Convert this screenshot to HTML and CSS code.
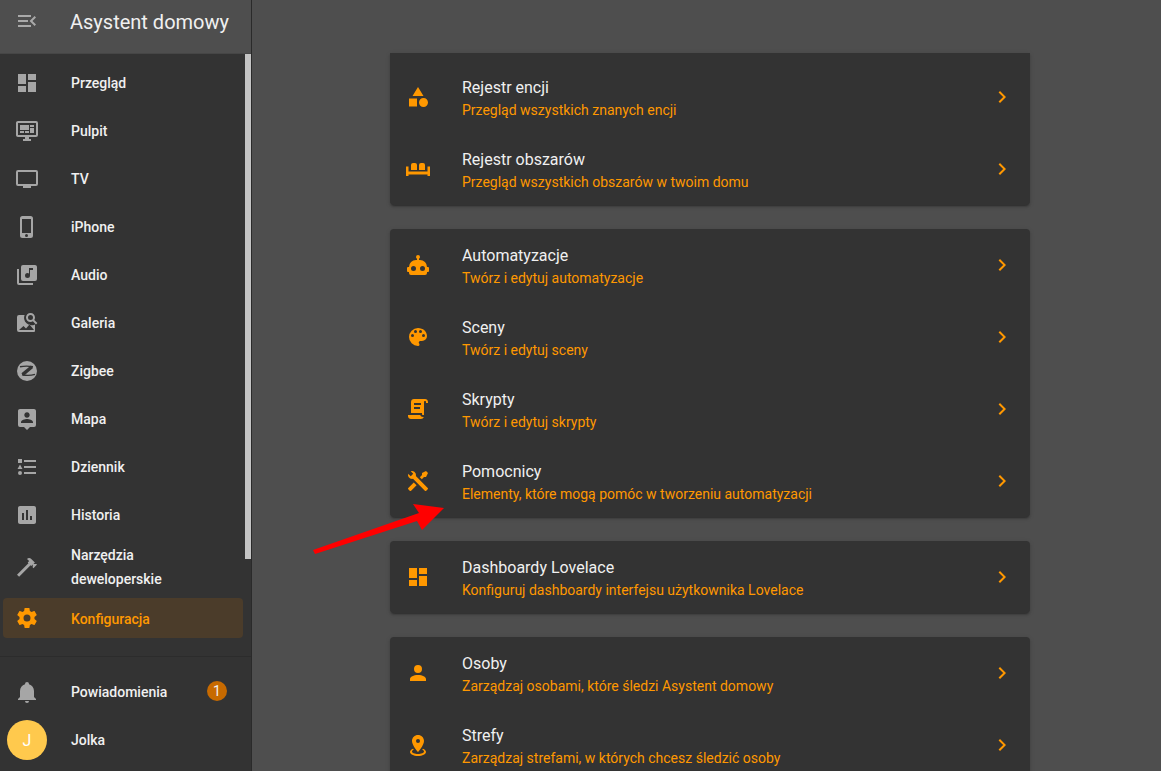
FILE: index.html
```html
<!DOCTYPE html>
<html lang="pl">
<head>
<meta charset="utf-8">
<title>Asystent domowy</title>
<link rel="stylesheet" href="styles.css">
</head>
<body>
<div class="app">
  <aside class="sidebar">
    <header class="side-head">
      <svg class="icon head-icon" viewBox="0 0 24 24"><path d="M21,15.61L19.59,17L14.58,12L19.59,7L21,8.39L17.44,12L21,15.61M3,6H16V8H3V6M3,13V11H13V13H3M3,18V16H16V18H3Z"/></svg>
      <span class="side-title">Asystent domowy</span>
    </header>
    <div class="side-scroll">
      <nav class="nav-list">
        <a class="nav-item"><svg class="icon" viewBox="0 0 24 24"><path d="M13,3V9H21V3M13,21H21V11H13M3,21H11V15H3M3,13H11V3H3V13Z"/></svg><span>Przegląd</span></a>
        <a class="nav-item"><svg class="icon" viewBox="0 0 24 24"><path d="M21,16V4H3V16H21M21,2A2,2 0 0,1 23,4V16A2,2 0 0,1 21,18H14V20H16V22H8V20H10V18H3C1.89,18 1,17.1 1,16V4C1,2.89 1.89,2 3,2H21M5,6H14V11H5V6M15,6H19V8H15V6M19,9V14H15V9H19M5,12H9V14H5V12M10,12H14V14H10V12Z"/></svg><span>Pulpit</span></a>
        <a class="nav-item"><svg class="icon" viewBox="0 0 24 24"><path d="M21,17H3V5H21M21,3H3A2,2 0 0,0 1,5V17A2,2 0 0,0 3,19H8V21H16V19H21A2,2 0 0,0 23,17V5A2,2 0 0,0 21,3Z"/></svg><span>TV</span></a>
        <a class="nav-item"><svg class="icon" viewBox="0 0 24 24"><path d="M16,18H7V4H16M11.5,22A1.5,1.5 0 0,1 10,20.5A1.5,1.5 0 0,1 11.5,19A1.5,1.5 0 0,1 13,20.5A1.5,1.5 0 0,1 11.5,22M15.5,1H7.5A2.5,2.5 0 0,0 5,3.5V20.5A2.5,2.5 0 0,0 7.5,23H15.5A2.5,2.5 0 0,0 18,20.5V3.5A2.5,2.5 0 0,0 15.5,1Z"/></svg><span>iPhone</span></a>
        <a class="nav-item"><svg class="icon" viewBox="0 0 24 24"><path d="M4,6H2V20A2,2 0 0,0 4,22H18V20H4M18,7H15V12.5A2.5,2.5 0 0,1 12.5,15A2.5,2.5 0 0,1 10,12.5A2.5,2.5 0 0,1 12.5,10C13.07,10 13.58,10.19 14,10.5V5H18M20,2H8A2,2 0 0,0 6,4V16A2,2 0 0,0 8,18H20A2,2 0 0,0 22,16V4C22,2.89 21.1,2 20,2Z"/></svg><span>Audio</span></a>
        <a class="nav-item"><svg class="icon" viewBox="0 0 24 24"><path d="M15.5,2C18,2 20,4 20,6.5C20,7.38 19.75,8.21 19.31,8.9L22.39,12L21,13.39L17.88,10.32C17.19,10.75 16.37,11 15.5,11C13,11 11,9 11,6.5C11,4 13,2 15.5,2M15.5,4A2.5,2.5 0 0,0 13,6.5A2.5,2.5 0 0,0 15.5,9A2.5,2.5 0 0,0 18,6.5A2.5,2.5 0 0,0 15.5,4Z"/><path fill-rule="evenodd" d="M4,4H9.6A7.5,7.5 0 0,0 20,13.4V20A1,1 0 0,1 19,21H4A2,2 0 0,1 2,19V6A2,2 0 0,1 4,4M4,19H19L14.5,13.5L11,17.5L8.5,15Z"/></svg><span>Galeria</span></a>
        <a class="nav-item"><svg class="icon" viewBox="0 0 24 24"><circle cx="12" cy="12" r="10"/><path class="z-thin" d="M5 7.8C9 7 14 7 18 7.8"/><path class="z-thick" d="M17 7.8L7.5 15.6"/><path class="z-thin" d="M7 15.8C11 16.6 16 16.6 20 15.4"/></svg><span>Zigbee</span></a>
        <a class="nav-item"><svg class="icon" viewBox="0 0 24 24"><path d="M18,16H6V15.1C6,13.1 10,12 12,12C14,12 18,13.1 18,15.1M12,5.3C13.5,5.3 14.7,6.5 14.7,8C14.7,9.5 13.5,10.7 12,10.7C10.5,10.7 9.3,9.5 9.3,8C9.3,6.5 10.5,5.3 12,5.3M19,2H5C3.89,2 3,2.89 3,4V18A2,2 0 0,0 5,20H9L12,23L15,20H19A2,2 0 0,0 21,18V4C21,2.89 20.1,2 19,2Z"/></svg><span>Mapa</span></a>
        <a class="nav-item"><svg class="icon" viewBox="0 0 24 24"><path d="M5,9.5L7.5,14H2.5L5,9.5M3,4H7V8H3V4M5,20A2,2 0 0,0 7,18A2,2 0 0,0 5,16A2,2 0 0,0 3,18A2,2 0 0,0 5,20M9,5V7H21V5H9M9,19H21V17H9V19M9,13H21V11H9V13Z"/></svg><span>Dziennik</span></a>
        <a class="nav-item"><svg class="icon" viewBox="0 0 24 24"><path d="M9 17H7V10H9V17M13 17H11V7H13V17M17 17H15V13H17V17M19 3H5C3.9 3 3 3.9 3 5V19C3 20.1 3.9 21 5 21H19C20.1 21 21 20.1 21 19V5C21 3.9 20.1 3 19 3Z"/></svg><span>Historia</span></a>
        <a class="nav-item nav-tall"><svg class="icon" viewBox="0 0 24 24"><path d="M2 19.63L13.43 8.2L12.72 7.5L14.14 6.07L12 3.89C13.2 2.7 15.09 2.7 16.27 3.89L19.87 7.5L18.45 8.91H21.29L22 9.62L18.45 13.21L17.74 12.5V9.62L16.27 11.04L15.56 10.33L4.13 21.76L2 19.63Z"/></svg><span>Narzędzia deweloperskie</span></a>
        <a class="nav-item nav-active"><svg class="icon" viewBox="0 0 24 24"><path d="M12,15.5A3.5,3.5 0 0,1 8.5,12A3.5,3.5 0 0,1 12,8.5A3.5,3.5 0 0,1 15.5,12A3.5,3.5 0 0,1 12,15.5M19.43,12.97C19.47,12.65 19.5,12.33 19.5,12C19.5,11.67 19.47,11.34 19.43,11L21.54,9.37C21.73,9.22 21.78,8.95 21.66,8.73L19.66,5.27C19.54,5.05 19.27,4.96 19.05,5.05L16.56,6.05C16.04,5.66 15.5,5.32 14.87,5.07L14.5,2.42C14.46,2.18 14.25,2 14,2H10C9.75,2 9.54,2.18 9.5,2.42L9.13,5.07C8.5,5.32 7.96,5.66 7.44,6.05L4.95,5.05C4.73,4.96 4.46,5.05 4.34,5.27L2.34,8.73C2.21,8.95 2.27,9.22 2.46,9.37L4.57,11C4.53,11.34 4.5,11.67 4.5,12C4.5,12.33 4.53,12.65 4.57,12.97L2.46,14.63C2.27,14.78 2.21,15.05 2.34,15.27L4.34,18.73C4.46,18.95 4.73,19.03 4.95,18.95L7.44,17.94C7.96,18.34 8.5,18.68 9.13,18.93L9.5,21.58C9.54,21.82 9.75,22 10,22H14C14.25,22 14.46,21.82 14.5,21.58L14.87,18.93C15.5,18.67 16.04,18.34 16.56,17.94L19.05,18.95C19.27,19.03 19.54,18.95 19.66,18.73L21.66,15.27C21.78,15.05 21.73,14.78 21.54,14.63L19.43,12.97Z"/></svg><span class="active-label">Konfiguracja</span></a>
      </nav>
      <div class="scrollbar"></div>
    </div>
    <div class="side-foot">
      <a class="foot-item"><svg class="icon" viewBox="0 0 24 24"><path d="M21,19V20H3V19L5,17V11C5,7.9 7.03,5.17 10,4.29C10,4.19 10,4.1 10,4A2,2 0 0,1 12,2A2,2 0 0,1 14,4C14,4.1 14,4.19 14,4.29C16.97,5.17 19,7.9 19,11V17L21,19M14,21A2,2 0 0,1 12,23A2,2 0 0,1 10,21"/></svg><span class="foot-label">Powiadomienia</span><span class="badge">1</span></a>
      <a class="foot-item foot-user"><span class="avatar">J</span><span class="foot-label">Jolka</span></a>
    </div>
  </aside>
  <main class="main">
    <div class="top-bar"></div>
    <div class="content">
      <section class="card card-first">
        <a class="row"><svg class="icon" viewBox="0 0 24 24"><path d="M11,13.5V21.5H3V13.5H11M12,2L17.5,11H6.5L12,2M17.5,13C20,13 22,15 22,17.5C22,20 20,22 17.5,22C15,22 13,20 13,17.5C13,15 15,13 17.5,13Z"/></svg><div class="text"><div class="title">Rejestr encji</div><div class="sub">Przegląd wszystkich znanych encji</div></div><svg class="icon chev" viewBox="0 0 24 24"><path d="M8.59,16.58L13.17,12L8.59,7.41L10,6L16,12L10,18L8.59,16.58Z"/></svg></a>
        <a class="row"><svg class="icon" viewBox="0 0 24 24"><path d="M0 9.5H2.5V19H0ZM21.5 9.5H24V19H21.5ZM2.5 14.5H21.5V17.5H2.5ZM5 8A2 2 0 0 1 7 6H9A2 2 0 0 1 11 8V13H5ZM13 8A2 2 0 0 1 15 6H17A2 2 0 0 1 19 8V13H13Z"/></svg><div class="text"><div class="title">Rejestr obszarów</div><div class="sub">Przegląd wszystkich obszarów w twoim domu</div></div><svg class="icon chev" viewBox="0 0 24 24"><path d="M8.59,16.58L13.17,12L8.59,7.41L10,6L16,12L10,18L8.59,16.58Z"/></svg></a>
      </section>
      <section class="card">
        <a class="row"><svg class="icon" viewBox="0 0 24 24"><path d="M12,2A2,2 0 0,1 14,4C14,4.74 13.6,5.39 13,5.73V7H14A7,7 0 0,1 21,14H22A1,1 0 0,1 23,15V18A1,1 0 0,1 22,19H21V20A2,2 0 0,1 19,22H5A2,2 0 0,1 3,20V19H2A1,1 0 0,1 1,18V15A1,1 0 0,1 2,14H3A7,7 0 0,1 10,7H11V5.73C10.4,5.39 10,4.74 10,4A2,2 0 0,1 12,2M7.5,13A2.5,2.5 0 0,0 5,15.5A2.5,2.5 0 0,0 7.5,18A2.5,2.5 0 0,0 10,15.5A2.5,2.5 0 0,0 7.5,13M16.5,13A2.5,2.5 0 0,0 14,15.5A2.5,2.5 0 0,0 16.5,18A2.5,2.5 0 0,0 19,15.5A2.5,2.5 0 0,0 16.5,13Z"/></svg><div class="text"><div class="title">Automatyzacje</div><div class="sub">Twórz i edytuj automatyzacje</div></div><svg class="icon chev" viewBox="0 0 24 24"><path d="M8.59,16.58L13.17,12L8.59,7.41L10,6L16,12L10,18L8.59,16.58Z"/></svg></a>
        <a class="row"><svg class="icon" viewBox="0 0 24 24"><path d="M17.5,12A1.5,1.5 0 0,1 16,10.5A1.5,1.5 0 0,1 17.5,9A1.5,1.5 0 0,1 19,10.5A1.5,1.5 0 0,1 17.5,12M14.5,8A1.5,1.5 0 0,1 13,6.5A1.5,1.5 0 0,1 14.5,5A1.5,1.5 0 0,1 16,6.5A1.5,1.5 0 0,1 14.5,8M9.5,8A1.5,1.5 0 0,1 8,6.5A1.5,1.5 0 0,1 9.5,5A1.5,1.5 0 0,1 11,6.5A1.5,1.5 0 0,1 9.5,8M6.5,12A1.5,1.5 0 0,1 5,10.5A1.5,1.5 0 0,1 6.5,9A1.5,1.5 0 0,1 8,10.5A1.5,1.5 0 0,1 6.5,12M12,3A9,9 0 0,0 3,12A9,9 0 0,0 12,21A1.5,1.5 0 0,0 13.5,19.5C13.5,19.11 13.35,18.76 13.11,18.5C12.88,18.23 12.73,17.88 12.73,17.5A1.5,1.5 0 0,1 14.23,16H16A5,5 0 0,0 21,11C21,6.58 16.97,3 12,3Z"/></svg><div class="text"><div class="title">Sceny</div><div class="sub">Twórz i edytuj sceny</div></div><svg class="icon chev" viewBox="0 0 24 24"><path d="M8.59,16.58L13.17,12L8.59,7.41L10,6L16,12L10,18L8.59,16.58Z"/></svg></a>
        <a class="row"><svg class="icon" viewBox="0 0 24 24"><path d="M17.8,20C17.4,21.2 16.3,22 15,22H5C3.3,22 2,20.7 2,19V18H5L14.2,18C14.6,19.2 15.7,20 17,20H17.8M19,2C20.7,2 22,3.3 22,5V6H20V5C20,4.4 19.6,4 19,4C18.4,4 18,4.4 18,5V18H17C16.4,18 16,17.6 16,17V16H5V5C5,3.3 6.3,2 8,2H19M8,6V8H15V6H8M8,10V12H14V10H8Z"/></svg><div class="text"><div class="title">Skrypty</div><div class="sub">Twórz i edytuj skrypty</div></div><svg class="icon chev" viewBox="0 0 24 24"><path d="M8.59,16.58L13.17,12L8.59,7.41L10,6L16,12L10,18L8.59,16.58Z"/></svg></a>
        <a class="row"><svg class="icon" viewBox="0 0 24 24"><path d="M21.71 20.29L20.29 21.71A1 1 0 0 1 18.88 21.71L7 9.85A3.81 3.81 0 0 1 6 10A4 4 0 0 1 2.22 4.7L4.76 7.24L5.29 6.71L6.71 5.29L7.24 4.76L4.7 2.22A4 4 0 0 1 10 6A3.81 3.81 0 0 1 9.85 7L21.71 18.88A1 1 0 0 1 21.71 20.29M2.29 18.88A1 1 0 0 0 2.29 20.29L3.71 21.71A1 1 0 0 0 5.12 21.71L10.59 16.25L7.76 13.42M20 2L16 4V6L13.83 8.17L15.83 10.17L18 8H20L22 4Z"/></svg><div class="text"><div class="title">Pomocnicy</div><div class="sub">Elementy, które mogą pomóc w tworzeniu automatyzacji</div></div><svg class="icon chev" viewBox="0 0 24 24"><path d="M8.59,16.58L13.17,12L8.59,7.41L10,6L16,12L10,18L8.59,16.58Z"/></svg></a>
      </section>
      <section class="card">
        <a class="row"><svg class="icon" viewBox="0 0 24 24"><path d="M13,3V9H21V3M13,21H21V11H13M3,21H11V15H3M3,13H11V3H3V13Z"/></svg><div class="text"><div class="title">Dashboardy Lovelace</div><div class="sub">Konfiguruj dashboardy interfejsu użytkownika Lovelace</div></div><svg class="icon chev" viewBox="0 0 24 24"><path d="M8.59,16.58L13.17,12L8.59,7.41L10,6L16,12L10,18L8.59,16.58Z"/></svg></a>
      </section>
      <section class="card">
        <a class="row"><svg class="icon" viewBox="0 0 24 24"><path d="M12,4A4,4 0 0,1 16,8A4,4 0 0,1 12,12A4,4 0 0,1 8,8A4,4 0 0,1 12,4M12,14C16.42,14 20,15.79 20,18V20H4V18C4,15.79 7.58,14 12,14Z"/></svg><div class="text"><div class="title">Osoby</div><div class="sub">Zarządzaj osobami, które śledzi Asystent domowy</div></div><svg class="icon chev" viewBox="0 0 24 24"><path d="M8.59,16.58L13.17,12L8.59,7.41L10,6L16,12L10,18L8.59,16.58Z"/></svg></a>
        <a class="row"><svg class="icon" viewBox="0 0 24 24"><path d="M12,2C15.31,2 18,4.66 18,7.95C18,12.41 12,19 12,19C12,19 6,12.41 6,7.95C6,4.66 8.69,2 12,2M12,6A2,2 0 0,0 10,8A2,2 0 0,0 12,10A2,2 0 0,0 14,8A2,2 0 0,0 12,6M20,19C20,21.21 16.42,23 12,23C7.58,23 4,21.21 4,19C4,17.71 5.22,16.56 7.11,15.83L7.75,16.74C6.67,17.19 6,17.81 6,18.5C6,19.88 8.69,21 12,21C15.31,21 18,19.88 18,18.5C18,17.81 17.33,17.19 16.25,16.74L16.89,15.83C18.78,16.56 20,17.71 20,19Z"/></svg><div class="text"><div class="title">Strefy</div><div class="sub">Zarządzaj strefami, w których chcesz śledzić osoby</div></div><svg class="icon chev" viewBox="0 0 24 24"><path d="M8.59,16.58L13.17,12L8.59,7.41L10,6L16,12L10,18L8.59,16.58Z"/></svg></a>
      </section>
    </div>
    <svg class="arrow" viewBox="0 0 1161 771"><path d="M313 550L419 513L413 504L444 508L422 530L417 521L315 554Z"/></svg>
  </main>
</div>
</body>
</html>
```
FILE: styles.css
```css
* { box-sizing: border-box; }
html, body { margin: 0; height: 100%; overflow: hidden; }
body { font-family: Roboto, "Liberation Sans", sans-serif; background: #4e4e4e; color: #f0f0f0; }
.app { display: flex; height: 771px; width: 1161px; position: relative; }
.icon { width: 24px; height: 24px; flex: none; fill: currentColor; display: block; }

.sidebar { width: 252px; flex: none; display: flex; flex-direction: column; background: #333333; border-right: 1px solid #2a2a2a; color: #a6a6a6; }
.side-head { height: 54px; flex: none; display: flex; align-items: flex-start; background: #4e4e4e; border-bottom: 1px solid #464646; padding: 9px 0 0 15px; gap: 31px; }
.head-icon { color: #a9a9a9; }
.side-title { font-size: 20px; line-height: 26px; color: #f0f0f0; }

.side-scroll { flex: 1; min-height: 0; display: flex; }
.nav-list { flex: 1; min-width: 0; padding-top: 5px; display: flex; flex-direction: column; }
.scrollbar { width: 6px; height: 505px; background: #c4c4c4; flex: none; }
.nav-item { height: 48px; flex: none; display: flex; align-items: center; padding-left: 15px; gap: 32px; font-size: 14px; font-weight: 500; color: #f0f0f0; }
.nav-item .icon { color: #a6a6a6; }
.z-thin, .z-thick { fill: none; stroke: #333333; }
.z-thin { stroke-width: 1.4; }
.z-thick { stroke-width: 3.4; }
.nav-tall { height: 59px; line-height: 24px; padding-right: 60px; padding-bottom: 3px; }
.nav-active { height: 40px; margin: 0 2px 0 3px; padding-left: 12px; border-radius: 4px; background: #4b3c2a; color: #ff9800; }
.nav-active .icon { color: #ff9800; }
.active-label { padding-top: 2px; }

.side-foot { flex: none; height: 115px; border-top: 1px solid #2c2c2c; padding-top: 11px; }
.foot-item { height: 48px; display: flex; align-items: center; padding-left: 15px; font-size: 14px; font-weight: 500; color: #f0f0f0; position: relative; }
.foot-item .icon { color: #a6a6a6; }
.foot-label { margin-left: 32px; }
.foot-user { padding-left: 7px; }
.foot-user .foot-label { margin-left: 24px; }
.avatar { width: 40px; height: 40px; border-radius: 50%; background: #ffc94d; color: #fff; display: flex; align-items: center; justify-content: center; font-size: 16px; font-weight: 400; }
.badge { position: absolute; left: 207px; top: 13px; width: 20px; height: 20px; border-radius: 50%; background: #c76a00; color: #f0f0f0; font-size: 14px; font-weight: 400; display: flex; align-items: center; justify-content: center; }

.main { flex: 1; min-width: 0; display: flex; flex-direction: column; overflow: hidden; }
.top-bar { height: 53px; flex: none; }
.content { width: 640px; margin-left: 138px; display: flex; flex-direction: column; gap: 24px; }
.card { background: #333333; border-radius: 4px; box-shadow: 0 2px 2px rgba(0,0,0,.14), 0 1px 5px rgba(0,0,0,.12), 0 3px 1px -2px rgba(0,0,0,.2); }
.card-first { padding: 8px 0 0; border-radius: 0 0 4px 4px; }
.row { height: 72px; display: flex; align-items: center; padding: 0 16px; color: #ff9800; }
.text { flex: 1; min-width: 0; margin-left: 32px; padding-top: 2px; }
.title { font-size: 16px; line-height: 24px; color: #f0f0f0; }
.sub { font-size: 14px; line-height: 20px; color: #ff9800; }

.arrow { position: absolute; left: 0; top: 0; width: 1161px; height: 771px; fill: #ff0000; pointer-events: none; }
```
